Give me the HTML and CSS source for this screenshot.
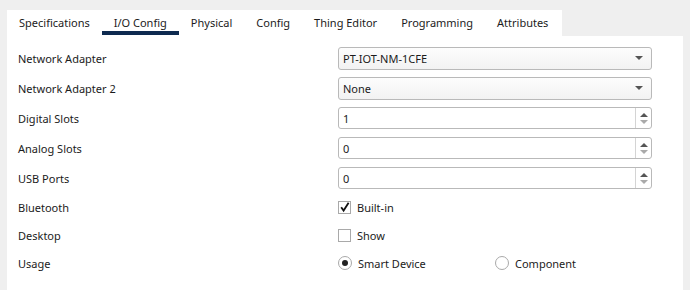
FILE: index.html
```html
<!DOCTYPE html>
<html lang="en">
<head>
  <meta charset="UTF-8" />
  <title>I/O Config</title>
  <link rel="stylesheet" href="styles.css">
</head>
<body>
  <div class="tabs">
    <div class="tab">Specifications</div>
    <div class="tab active">I/O Config</div>
    <div class="tab">Physical</div>
    <div class="tab">Config</div>
    <div class="tab">Thing Editor</div>
    <div class="tab">Programming</div>
    <div class="tab">Attributes</div>
  </div>

  <div class="panel">
    <div class="row">
      <span class="label">Network Adapter</span>
      <div class="select"><span>PT-IOT-NM-1CFE</span><i class="caret"></i></div>
    </div>
    <div class="row">
      <span class="label">Network Adapter 2</span>
      <div class="select"><span>None</span><i class="caret"></i></div>
    </div>
    <div class="row">
      <span class="label">Digital Slots</span>
      <div class="spin"><span>1</span><div class="arrows"><i class="up"></i><i class="down"></i></div></div>
    </div>
    <div class="row">
      <span class="label">Analog Slots</span>
      <div class="spin"><span>0</span><div class="arrows"><i class="up"></i><i class="down"></i></div></div>
    </div>
    <div class="row">
      <span class="label">USB Ports</span>
      <div class="spin"><span>0</span><div class="arrows"><i class="up"></i><i class="down"></i></div></div>
    </div>
    <div class="row short">
      <span class="label">Bluetooth</span>
      <label class="check">
        <span class="box">
          <svg width="12" height="12" viewBox="0 0 12 12"><path d="M2.2 6.2 L4.6 9.6 L9.6 1.8" fill="none" stroke="#111" stroke-width="1.8"/></svg>
        </span>Built-in
      </label>
    </div>
    <div class="row short">
      <span class="label">Desktop</span>
      <label class="check"><span class="box"></span>Show</label>
    </div>
    <div class="row short">
      <span class="label">Usage</span>
      <div class="radios">
        <label class="radio"><span class="dot on"></span>Smart Device</label>
        <label class="radio"><span class="dot"></span>Component</label>
      </div>
    </div>
  </div>
</body>
</html>
```

FILE: styles.css
```css
body {
  margin: 0;
  padding: 10px 7px 0;
  background: #efefef;
  font-family: 'Noto Sans', sans-serif;
  font-size: 11px;
  color: #1b1b1b;
  height: 290px;
  box-sizing: border-box;
  overflow: hidden;
}
.tabs {
  display: flex;
  width: 555px;
  height: 26px;
  background: #fff;
}
.tab {
  flex: none;
  white-space: nowrap;
  padding: 0 12px;
  line-height: 25px;
  position: relative;
}
.tab.active::after {
  content: "";
  position: absolute;
  left: 0;
  right: 0;
  top: 21px;
  height: 4px;
  background: #0e2a50;
}
.panel {
  width: 665px;
  height: 260px;
  background: #fff;
  padding: 7px 0 0 11px;
}
.row {
  display: grid;
  grid-template-columns: 320px 314px;
  align-items: center;
  height: 30px;
}
.row.short {
  height: 28px;
}
.select, .spin {
  height: 23px;
  box-sizing: border-box;
  border: 1px solid #b9b9b9;
  border-radius: 3px;
  display: flex;
  align-items: center;
  padding-left: 4px;
}
.select {
  background: linear-gradient(#fdfdfd, #f2f2f2);
}
.select span, .spin span {
  flex: 1;
}
.caret {
  width: 0;
  height: 0;
  border-left: 4px solid transparent;
  border-right: 4px solid transparent;
  border-top: 4px solid #555;
  margin-right: 8px;
}
.spin {
  height: 22px;
  background: #fff;
}
.arrows {
  width: 15px;
  height: 100%;
  border-left: 1px solid #d4d4d4;
  display: flex;
  flex-direction: column;
  align-items: center;
  justify-content: center;
  gap: 3px;
}
.arrows .up {
  border-left: 4px solid transparent;
  border-right: 4px solid transparent;
  border-bottom: 4px solid #555;
}
.arrows .down {
  border-left: 4px solid transparent;
  border-right: 4px solid transparent;
  border-top: 4px solid #aaa;
}
.check, .radio {
  display: flex;
  align-items: center;
  gap: 6px;
}
.box {
  width: 13px;
  height: 13px;
  border: 1px solid #a9a9a9;
  box-sizing: border-box;
  display: flex;
  align-items: center;
  justify-content: center;
  background: #fff;
}
.box svg {
  flex: none;
}
.radios {
  display: flex;
}
.radio {
  width: 160px;
}
.dot {
  width: 14px;
  height: 14px;
  border: 1px solid #a9a9a9;
  border-radius: 50%;
  box-sizing: border-box;
  display: flex;
  align-items: center;
  justify-content: center;
}
.dot.on::after {
  content: "";
  width: 6px;
  height: 6px;
  border-radius: 50%;
  background: #222;
}
```
